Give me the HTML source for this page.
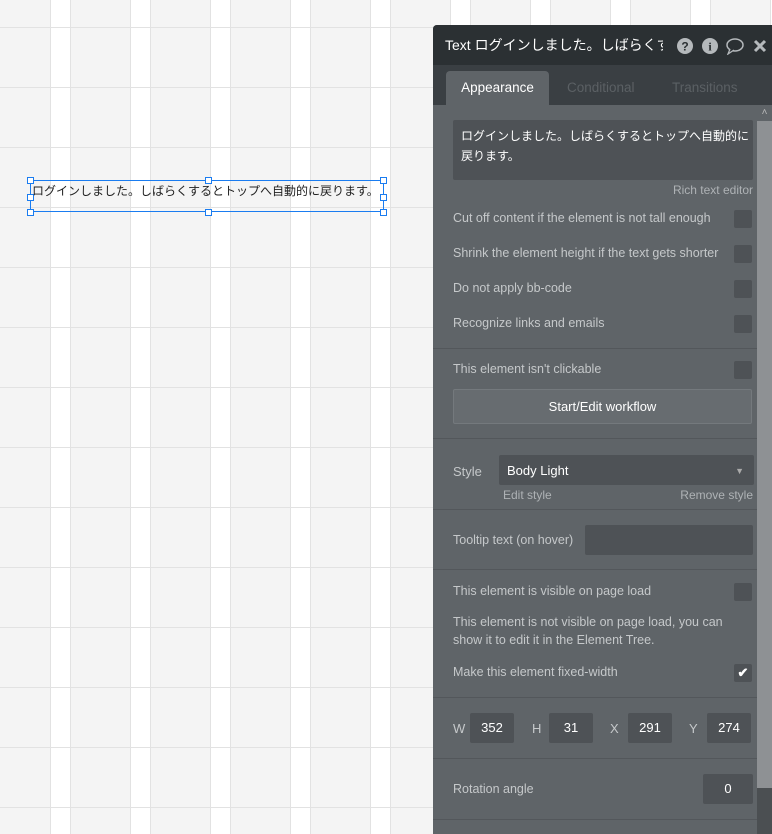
<!DOCTYPE html>
<html><head><meta charset="utf-8"><style>
*{margin:0;padding:0;box-sizing:border-box}
body{width:772px;height:834px;overflow:hidden;position:relative;font-family:"Liberation Sans","Noto Sans CJK JP",sans-serif;font-size:12.5px;
background-color:#f4f4f4;
background-image:
linear-gradient(to bottom,#e2e2e2 1px,transparent 1px),
linear-gradient(to right,#e2e2e2 1px,#fff 1px,#fff 20px,#e2e2e2 20px,#e2e2e2 21px,transparent 21px);
background-size:772px 60px,80px 834px;
background-position:0 27px,50px 0;}
.a{position:absolute}
.sel{left:30px;top:180px;width:354px;height:32px;border:1px solid #1a7cf0}
.h{position:absolute;width:7px;height:7px;border:1px solid #1a7cf0;background:#fff}
#p{left:433px;top:25px;width:339px;height:809px;background:#5f6468;border-radius:4px 0 0 0;overflow:hidden}
.hd{left:0;top:0;width:339px;height:40px;background:#2b3033;color:#fff;font-size:14px;padding:10px 0 0 12px;white-space:nowrap}
.tb{left:0;top:40px;width:339px;height:40px;background:#3a3f43}
.lbl{position:absolute;left:20px;color:#c5c8ca;font-size:12.5px}
.cb{position:absolute;left:301px;width:18px;height:18px;background:#4e5256;border-radius:2px}
.ln{position:absolute;left:0;width:324px;height:1px;background:#53575b}
.inp{position:absolute;background:#4e5256;border-radius:2px;color:#fff;text-align:center;font-size:13px}
</style></head><body>
<div class="a sel"></div>
<div class="h" style="left:27px;top:177px"></div><div class="h" style="left:205px;top:177px"></div><div class="h" style="left:380px;top:177px"></div>
<div class="h" style="left:27px;top:194px"></div><div class="h" style="left:380px;top:194px"></div>
<div class="h" style="left:27px;top:209px"></div><div class="h" style="left:205px;top:209px"></div><div class="h" style="left:380px;top:209px"></div>
<div class="a" style="left:32px;top:182px;font-size:12px;color:#222;white-space:nowrap">ログインしました。しばらくするとトップへ自動的に戻ります。</div>

<div class="a" id="p">
<div class="a hd">Text ログインしました。しばらく<span style="display:inline-block;width:6px;overflow:hidden;vertical-align:top">す</span></div>
<div class="a" style="left:236px;top:8px;width:94px;height:26px;background:#2b3033"></div>
<svg class="a" style="left:244px;top:12px" width="96" height="18" viewBox="0 0 96 18">
<circle cx="8" cy="9" r="8" fill="#b5b9bc"/><text x="8" y="13.5" fill="#2b3033" font-size="12" font-weight="bold" text-anchor="middle" font-family="Liberation Sans">?</text>
<circle cx="33" cy="9" r="8" fill="#b5b9bc"/><text x="33" y="13.5" fill="#2b3033" font-size="12" font-weight="bold" text-anchor="middle" font-family="Liberation Serif">i</text>
<ellipse cx="58" cy="8" rx="8" ry="6" fill="none" stroke="#b5b9bc" stroke-width="1.5"/><path d="M53 12 L51 17 L57 13" fill="#2b3033" stroke="#b5b9bc" stroke-width="1.3"/>
<path d="M78 4 L88 14 M88 4 L78 14" stroke="#b5b9bc" stroke-width="3"/>
</svg>
<div class="a tb"></div>
<div class="a" style="left:13px;top:46px;width:103px;height:35px;background:#5f6468;border-radius:4px 4px 0 0;color:#fff;font-size:13.5px;text-align:center;line-height:34px">Appearance</div>
<div class="a" style="left:134px;top:55px;color:#5b6064;font-size:13.5px">Conditional</div>
<div class="a" style="left:239px;top:55px;color:#5b6064;font-size:13.5px">Transitions</div>
<div class="a" style="left:324px;top:80px;width:15px;height:729px;background:#8e9194"></div>
<div class="a" style="left:324px;top:763px;width:15px;height:46px;background:#4b4f52"></div>
<div class="a" style="left:324px;top:80px;width:15px;height:16px;background:#5f6468;color:#bbb;font-size:10px;text-align:center;line-height:16px">&#x2C4;</div>

<div class="inp" style="left:20px;top:95px;width:300px;height:60px;text-align:left;padding:6px 0 0 8px;line-height:20px;font-size:12px;white-space:nowrap;overflow:hidden">ログインしました。しばらくするとトップへ自動的に<br>戻ります。</div>
<div class="a" style="right:19px;top:158px;color:#aeb2b5;font-size:12px">Rich text editor</div>

<div class="lbl" style="top:186px">Cut off content if the element is not tall enough</div><div class="cb" style="top:185px"></div>
<div class="lbl" style="top:221px">Shrink the element height if the text gets shorter</div><div class="cb" style="top:220px"></div>
<div class="lbl" style="top:256px">Do not apply bb-code</div><div class="cb" style="top:255px"></div>
<div class="lbl" style="top:291px">Recognize links and emails</div><div class="cb" style="top:290px"></div>
<div class="ln" style="top:323px"></div>
<div class="lbl" style="top:337px">This element isn't clickable</div><div class="cb" style="top:336px"></div>
<div class="a" style="left:20px;top:364px;width:299px;height:35px;background:#676c70;border:1px solid #74797d;border-radius:2px;color:#fff;font-size:13px;text-align:center;line-height:33px">Start/Edit workflow</div>
<div class="ln" style="top:413px"></div>
<div class="lbl" style="top:439px;font-size:13px">Style</div>
<div class="inp" style="left:66px;top:430px;width:255px;height:30px;text-align:left;padding-left:8px;line-height:32px">Body Light<span style="position:absolute;right:10px;top:0;color:#aaa;font-size:9px">&#9660;</span></div>
<div class="a" style="left:70px;top:463px;color:#aeb2b5;font-size:12px">Edit style</div>
<div class="a" style="right:19px;top:463px;color:#aeb2b5;font-size:12px">Remove style</div>
<div class="ln" style="top:484px"></div>
<div class="lbl" style="top:508px">Tooltip text (on hover)</div>
<div class="inp" style="left:152px;top:500px;width:168px;height:30px"></div>
<div class="ln" style="top:544px"></div>
<div class="lbl" style="top:559px">This element is visible on page load</div><div class="cb" style="top:558px"></div>
<div class="lbl" style="top:588px;line-height:18px;width:290px">This element is not visible on page load, you can show it to edit it in the Element Tree.</div>
<div class="lbl" style="top:640px">Make this element fixed-width</div><div class="cb" style="top:639px;color:#fff;font-size:13px;text-align:center;line-height:18px;font-weight:bold">&#10004;</div>
<div class="ln" style="top:672px"></div>
<div class="lbl" style="top:696px;font-size:13px">W</div><div class="inp" style="left:37px;top:688px;width:44px;height:30px;line-height:30px">352</div>
<div class="lbl" style="left:99px;top:696px;font-size:13px">H</div><div class="inp" style="left:116px;top:688px;width:44px;height:30px;line-height:30px">31</div>
<div class="lbl" style="left:177px;top:696px;font-size:13px">X</div><div class="inp" style="left:195px;top:688px;width:44px;height:30px;line-height:30px">291</div>
<div class="lbl" style="left:256px;top:696px;font-size:13px">Y</div><div class="inp" style="left:274px;top:688px;width:44px;height:30px;line-height:30px">274</div>
<div class="ln" style="top:733px"></div>
<div class="lbl" style="top:757px">Rotation angle</div>
<div class="inp" style="left:270px;top:749px;width:50px;height:30px;line-height:30px">0</div>
<div class="ln" style="top:794px"></div>
</div>
</body></html>
